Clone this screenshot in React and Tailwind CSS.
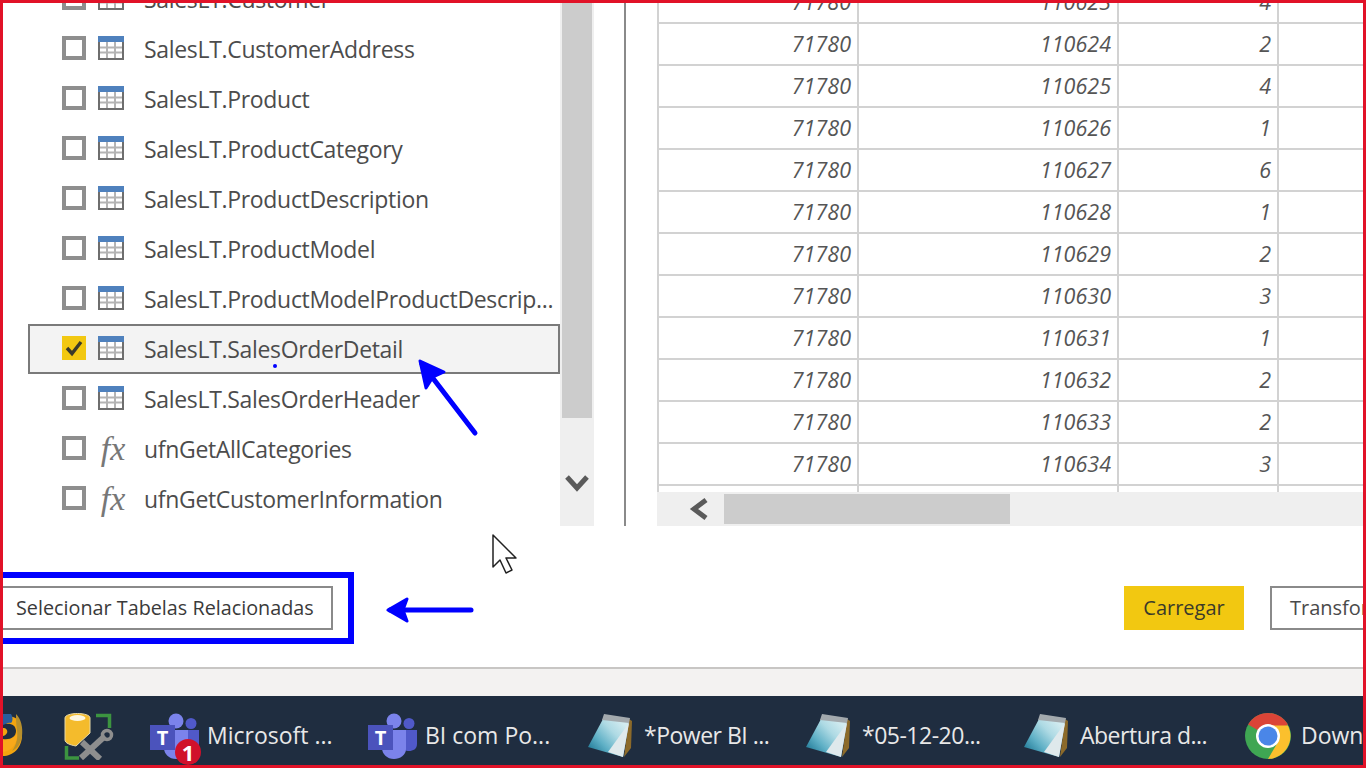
const FONT = "font-['Open_Sans',sans-serif]";

const TABLES = [
  { name: 'SalesLT.Customer' },
  { name: 'SalesLT.CustomerAddress' },
  { name: 'SalesLT.Product' },
  { name: 'SalesLT.ProductCategory' },
  { name: 'SalesLT.ProductDescription' },
  { name: 'SalesLT.ProductModel' },
  { name: 'SalesLT.ProductModelProductDescrip...' },
  { name: 'SalesLT.SalesOrderDetail', selected: true },
  { name: 'SalesLT.SalesOrderHeader' },
  { name: 'ufnGetAllCategories', fn: true },
  { name: 'ufnGetCustomerInformation', fn: true },
];

const ROWS = [
  ['71780', '110623', '4'],
  ['71780', '110624', '2'],
  ['71780', '110625', '4'],
  ['71780', '110626', '1'],
  ['71780', '110627', '6'],
  ['71780', '110628', '1'],
  ['71780', '110629', '2'],
  ['71780', '110630', '3'],
  ['71780', '110631', '1'],
  ['71780', '110632', '2'],
  ['71780', '110633', '2'],
  ['71780', '110634', '3'],
  ['', '', ''],
];

function TableIcon() {
  return (
    <svg width="26" height="24" viewBox="0 0 26 24" className="shrink-0 -mt-0.5">
      <rect x="1" y="1" width="24" height="22" fill="#fff" stroke="#6e6e6e" strokeWidth="2" />
      <path d="M2 11.5H24M2 16.5H24M9 6V22M17 6V22" stroke="#b4b4b4" strokeWidth="2" />
      <rect x="0" y="0" width="26" height="6" fill="#4f81bd" />
    </svg>
  );
}

function Checkbox({ checked }) {
  if (checked) {
    return (
      <div className="w-6 h-6 shrink-0 -mt-0.5 bg-[#f2c811] flex items-center justify-center">
        <svg width="20" height="18" viewBox="0 0 20 18">
          <path d="M3 9L8 14.5L17 3" fill="none" stroke="#3a3a2a" strokeWidth="3.4" />
        </svg>
      </div>
    );
  }
  return <div className="w-6 h-6 shrink-0 -mt-0.5 border-4 border-[#8e8e8e] bg-white" />;
}

function ListRow({ item }) {
  return (
    <div
      className={`h-[50px] w-[532px] shrink-0 flex items-center pl-[32px] border-2 ${
        item.selected ? 'border-[#7a7a7a] bg-[#f3f3f3]' : 'border-transparent'
      }`}
    >
      <Checkbox checked={item.selected} />
      <div className="w-[26px] ml-3 shrink-0 flex justify-center">
        {item.fn ? (
          <span className="ml-1 font-['Liberation_Serif',serif] italic text-[34px] leading-none text-[#777777]">fx</span>
        ) : (
          <TableIcon />
        )}
      </div>
      <span className="ml-5 text-[23px] text-[#4c4c4c] whitespace-nowrap tracking-[-0.32px]">{item.name}</span>
    </div>
  );
}

function DataRow({ row }) {
  return (
    <div className="h-[42px] shrink-0 flex border-b-2 border-[#d2d2d2] italic text-[21.5px] text-[#555555]">
      <div className="w-[200px] border-l-2 border-[#d2d2d2] pr-1.5 flex items-center justify-end">{row[0]}</div>
      <div className="w-[260px] border-l-2 border-[#d2d2d2] pr-1.5 flex items-center justify-end">{row[1]}</div>
      <div className="w-[160px] border-l-2 border-[#d2d2d2] pr-1.5 flex items-center justify-end">{row[2]}</div>
      <div className="flex-1 border-l-2 border-[#d2d2d2]" />
    </div>
  );
}

function FirefoxIcon() {
  return (
    <svg width="21" height="46" viewBox="0 0 21 46" className="shrink-0">
      <path d="M0 2C9 4 19 2 19 22C19 35 10 43 0 43Z" fill="#f2a40f" />
      <path d="M13 1C18 6 20 14 19 23C18 30 14 36 9 38C14 31 15 24 14 17C13 11 13 6 13 1Z" fill="#b8902c" />
      <path d="M0 1H8C10 4 10 8 8 10C5 9 2 11 0 14Z" fill="#2a5d9c" />
      <path d="M0 12C5 9 13 11 13 18C13 24 7 27 0 26Z" fill="#1f2d40" />
      <path d="M0 27C6 28 12 25 14 20C15 30 9 38 0 39Z" fill="#f9a91a" />
      <path d="M0 15C3 15 5 17 4 20C3 22 1 23 0 23Z" fill="#f2a40f" />
    </svg>
  );
}

function ToolIcon() {
  return (
    <svg width="50" height="48" viewBox="0 0 50 48" className="shrink-0">
      <path d="M1 6C1 0 26 0 26 6V21L12 34C6 33 1 31 1 28Z" fill="#f4bb2c" stroke="#e8d9a8" strokeWidth="1" />
      <ellipse cx="13.5" cy="6" rx="8" ry="3" fill="#fdf6df" />
      <path d="M32 3.5H45.5V16" fill="none" stroke="#3c9440" strokeWidth="3.5" />
      <path d="M2.5 34V46H15" fill="none" stroke="#3c9440" strokeWidth="3.5" />
      <path d="M18 30L36 47" stroke="#8e8e8e" strokeWidth="6" />
      <path d="M17 46L41 24" stroke="#8e8e8e" strokeWidth="6" />
      <circle cx="43" cy="23" r="4.5" fill="none" stroke="#8e8e8e" strokeWidth="3.5" />
    </svg>
  );
}

function TeamsIcon({ badge }) {
  return (
    <div className="relative w-[50px] h-[46px] shrink-0">
      <svg width="50" height="46" viewBox="0 0 50 46">
        <circle cx="26" cy="8" r="7.5" fill="#7b83eb" />
        <circle cx="41" cy="10.5" r="5.5" fill="#5059c9" />
        <path d="M35 17H49V31C49 36 45 38 41 38C37 38 35 36 35 34Z" fill="#5059c9" />
        <path d="M14 17H38V36C38 42 32 46 26 46C19 46 14 41 14 35Z" fill="#7b83eb" />
        <rect x="0" y="12" width="25" height="25" fill="#4b53bc" />
        <text x="12.5" y="31.5" textAnchor="middle" fontFamily="Open Sans, sans-serif" fontWeight="700" fontSize="20" fill="#fff">T</text>
      </svg>
      {badge && (
        <span className="absolute left-[25px] top-[26px] w-[26px] h-[26px] rounded-full bg-[#d0112b] text-white text-[22px] font-bold leading-[26px] text-center">
          {badge}
        </span>
      )}
    </div>
  );
}

function NotepadIcon({ id }) {
  return (
    <svg width="44" height="44" viewBox="0 0 44 44" className="shrink-0">
      <defs>
        <linearGradient id={id} x1="0" y1="0.85" x2="0.85" y2="0.1">
          <stop offset="0" stopColor="#1a7492" />
          <stop offset="0.35" stopColor="#5fb0c6" />
          <stop offset="0.7" stopColor="#aedae4" />
          <stop offset="1" stopColor="#d2ebf0" />
        </linearGradient>
      </defs>
      <path d="M41 5L44 7L43 34L36 43Z" fill="#8c6a2a" />
      <path d="M15 5L41 8L35 43L0 33Z" fill={`url(#${id})`} />
      <path d="M41 9L35 43L20 38Z" fill="#dfe9ec" />
      <path d="M16 0L42 4L41 9L14 6Z" fill="#a3a9ad" />
    </svg>
  );
}

function ChromeIcon() {
  return (
    <svg width="46" height="46" viewBox="0 0 46 46" className="shrink-0">
      <circle cx="23" cy="23" r="23" fill="#3fa653" />
      <path d="M23 23L3.1 11.5A23 23 0 0 1 42.9 11.5Z" fill="#db4437" />
      <path d="M23 12.5H42.9A23 23 0 0 1 23 46L33 29Z" fill="#fbc02d" />
      <circle cx="23" cy="23" r="12" fill="#fff" />
      <circle cx="23" cy="23" r="9.5" fill="#4a86e8" />
    </svg>
  );
}

function TaskItem({ icon, label, width, gap, tight }) {
  return (
    <div className="flex items-center shrink-0" style={{ width }}>
      {icon}
      {label && (
        <span
          className={`text-[23px] text-[#e8e8e8] whitespace-nowrap ${tight ? 'tracking-[-0.5px]' : ''}`}
          style={{ marginLeft: gap }}
        >
          {label}
        </span>
      )}
    </div>
  );
}

export default function App() {
  return (
    <div className={`relative w-[1366px] h-[768px] overflow-hidden bg-white border-[3px] border-[#e11228] flex flex-col ${FONT}`}>
      {/* Navigator + preview */}
      <div className="h-[523px] shrink-0 flex overflow-hidden">
        <div className="w-[25px] shrink-0" />
        <div className="w-[532px] shrink-0 -mt-[29px] flex flex-col">
          {TABLES.map((t) => (
            <ListRow key={t.name} item={t} />
          ))}
        </div>
        <div className="w-[34px] shrink-0 bg-[#efefef] flex flex-col items-center relative">
          <div className="w-[30px] h-[415px] bg-[#cccccc]" />
          <svg width="24" height="20" viewBox="0 0 24 20" className="mt-[56px]">
            <path d="M2 3L12 14L22 3" fill="none" stroke="#5a5a5a" strokeWidth="5" />
          </svg>
        </div>
        <div className="w-[30px] shrink-0" />
        <div className="w-[2px] shrink-0 bg-[#8a8a8a]" />
        <div className="w-[31px] shrink-0" />
        <div className="flex-1 min-w-0 flex flex-col overflow-hidden">
          <div className="h-[489px] shrink-0 overflow-hidden">
            <div className="-mt-[21px] flex flex-col">
              {ROWS.map((row, i) => (
                <DataRow key={i} row={row} />
              ))}
            </div>
          </div>
          <div className="h-[34px] shrink-0 bg-[#efefef] flex items-center">
            <div className="w-[67px] shrink-0 flex justify-center pl-[17px]">
              <svg width="20" height="24" viewBox="0 0 20 24">
                <path d="M17 3L5 12L17 21" fill="none" stroke="#5a5a5a" strokeWidth="5" />
              </svg>
            </div>
            <div className="w-[286px] h-[30px] bg-[#cccccc]" />
          </div>
        </div>
      </div>

      {/* Footer buttons */}
      <div className="flex-1 flex items-start pt-[60px]">
        <button className="w-[330px] h-[44px] border-2 border-l-0 border-[#8a8a8a] text-left pl-[13px] text-[19.8px] text-[#3a3a3a] whitespace-nowrap">
          Selecionar Tabelas Relacionadas
        </button>
        <div className="flex-1" />
        <button className="w-[120px] h-[44px] bg-[#f2c811] text-[20px] text-[#3a3a2a]">Carregar</button>
        <button className="ml-[26px] w-[93px] h-[44px] border-2 border-r-0 border-[#8a8a8a] pl-[18px] text-left text-[20px] text-[#4a4a4a] whitespace-nowrap overflow-hidden">
          Transformar
        </button>
      </div>

      <div className="h-[29px] shrink-0 border-t-2 border-[#c8c6c4] bg-[#f3f2f1]" />

      {/* Taskbar */}
      <div className="h-[69px] shrink-0 bg-[#1f2d40] flex items-center overflow-hidden pt-[10px]">
        <TaskItem icon={<FirefoxIcon />} width={61} />
        <TaskItem icon={<ToolIcon />} width={86} />
        <TaskItem icon={<TeamsIcon badge="1" />} label="Microsoft ..." width={218} gap={7} />
        <TaskItem icon={<TeamsIcon />} label="BI com Po..." width={220} gap={7} />
        <TaskItem icon={<NotepadIcon id="pad1" />} label="*Power BI ..." width={218} gap={12} tight />
        <TaskItem icon={<NotepadIcon id="pad2" />} label="*05-12-20..." width={218} gap={12} tight />
        <TaskItem icon={<NotepadIcon id="pad3" />} label="Abertura d..." width={221} gap={12} tight />
        <TaskItem icon={<ChromeIcon />} label="Download" width={118} gap={10} />
      </div>

      {/* Annotations drawn over the screenshot */}
      <div className="absolute left-0 top-[569px] w-[351px] h-[72px] border-[6px] border-l-0 border-[#0000ff] pointer-events-none" />
      <svg className="absolute left-[383px] top-[592px]" width="92" height="30" viewBox="0 0 92 30">
        <path d="M4 15H85" stroke="#0000ff" strokeWidth="5" strokeLinecap="round" />
        <path d="M2 15L21 4L17 15L21 26Z" fill="#0000ff" stroke="#0000ff" strokeWidth="3" strokeLinejoin="round" />
      </svg>
      <svg className="absolute left-[413px] top-[355px]" width="66" height="80" viewBox="0 0 66 80">
        <path d="M6 6L59 75" stroke="#0000ff" strokeWidth="5" strokeLinecap="round" />
        <path d="M4 3L28 14L17 19L10 30Z" fill="#0000ff" stroke="#0000ff" strokeWidth="3" strokeLinejoin="round" />
      </svg>
      <div className="absolute left-[270px] top-[361px] w-1 h-1 rounded-full bg-[#0000ff]" />
      <svg className="absolute left-[488px] top-[530px]" width="28" height="44" viewBox="0 0 28 44">
        <path d="M2 2V34L9 27L15 40L21 37L15 25H25Z" fill="#fff" stroke="#222" strokeWidth="1.5" strokeLinejoin="round" />
      </svg>
    </div>
  );
}
